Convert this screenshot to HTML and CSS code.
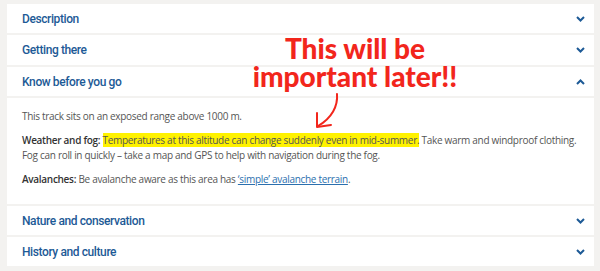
FILE: index.html
```html
<!DOCTYPE html>
<html>
<head>
  <meta charset="UTF-8">
  <title>Track information</title>
  <link rel="stylesheet" href="styles.css">
</head>
<body>
  <div class="accordion">
    <div class="acc-head">
      <span>Description</span>
      <svg class="chev" width="9" height="6" viewBox="0 0 9 6"><path d="M1 1 L4.5 4.5 L8 1" /></svg>
    </div>
    <div class="acc-head">
      <span>Getting there</span>
      <svg class="chev" width="9" height="6" viewBox="0 0 9 6"><path d="M1 1 L4.5 4.5 L8 1" /></svg>
    </div>
    <div class="acc-head">
      <span>Know before you go</span>
      <svg class="chev" width="9" height="6" viewBox="0 0 9 6"><path d="M1 5 L4.5 1.5 L8 5" /></svg>
    </div>
    <div class="acc-body">
      <p>This track sits on an exposed range above 1000 m.</p>
      <p><b>Weather and fog:</b> <mark>Temperatures at this altitude can change suddenly even in mid-summer.</mark> Take warm and windproof clothing. Fog can roll in quickly – take a map and GPS to help with navigation during the fog.</p>
      <p><b>Avalanches:</b> Be avalanche aware as this area has <a href="#">‘simple’ avalanche terrain</a>.</p>
    </div>
    <div class="acc-head">
      <span>Nature and conservation</span>
      <svg class="chev" width="9" height="6" viewBox="0 0 9 6"><path d="M1 1 L4.5 4.5 L8 1" /></svg>
    </div>
    <div class="acc-head">
      <span>History and culture</span>
      <svg class="chev" width="9" height="6" viewBox="0 0 9 6"><path d="M1 1 L4.5 4.5 L8 1" /></svg>
    </div>
  </div>

  <!-- hand-drawn note on top of the screenshot -->
  <div class="note">This will be<br>important later!!</div>
  <svg class="arrow" width="40" height="45" viewBox="0 0 40 45">
    <path d="M29 2 C30 14 24 26 10 34" />
    <path d="M9 21 L9 35 L23 33" />
  </svg>
</body>
</html>
```

FILE: styles.css
```css
body {
  margin: 0;
  padding: 4px 6px 4px 7px;
  background-color: #f3f2f0;
  font-family: "Open Sans", sans-serif;
}
.accordion {
  display: flex;
  flex-direction: column;
  gap: 2px;
}
.acc-head {
  height: 29px;
  padding: 0 9px 0 15px;
  display: flex;
  align-items: center;
  justify-content: space-between;
  background-color: #fff;
  color: #1d5a96;
  font-family: Roboto, sans-serif;
  font-weight: 500;
  font-size: 12px;
  letter-spacing: -0.4px;
}
.acc-head:nth-child(2) {
  height: 30px;
}
.chev {
  fill: none;
  stroke: #1d5a96;
  stroke-width: 2;
}
.acc-body {
  background-color: #fff;
  padding: 11px 10px 17px 15px;
  font-size: 10px;
  letter-spacing: -0.3px;
  line-height: 15px;
  color: #555;
}
.acc-body p {
  margin: 0 0 9px 0;
}
.acc-body p:last-child {
  margin-bottom: 0;
}
.acc-body b {
  color: #333;
  font-weight: 600;
}
.acc-body mark {
  background-color: #fff200;
  color: #555;
}
.acc-body a {
  color: #2b6fae;
}
.note {
  position: absolute;
  left: 240px;
  top: 34px;
  width: 230px;
  text-align: center;
  color: #f2261c;
  font-family: Lato, sans-serif;
  font-weight: 900;
  font-size: 28px;
  line-height: 28px;
}
.arrow {
  position: absolute;
  left: 308px;
  top: 92px;
  fill: none;
  stroke: #f2261c;
  stroke-width: 2;
  stroke-linecap: round;
  stroke-linejoin: round;
}
```
